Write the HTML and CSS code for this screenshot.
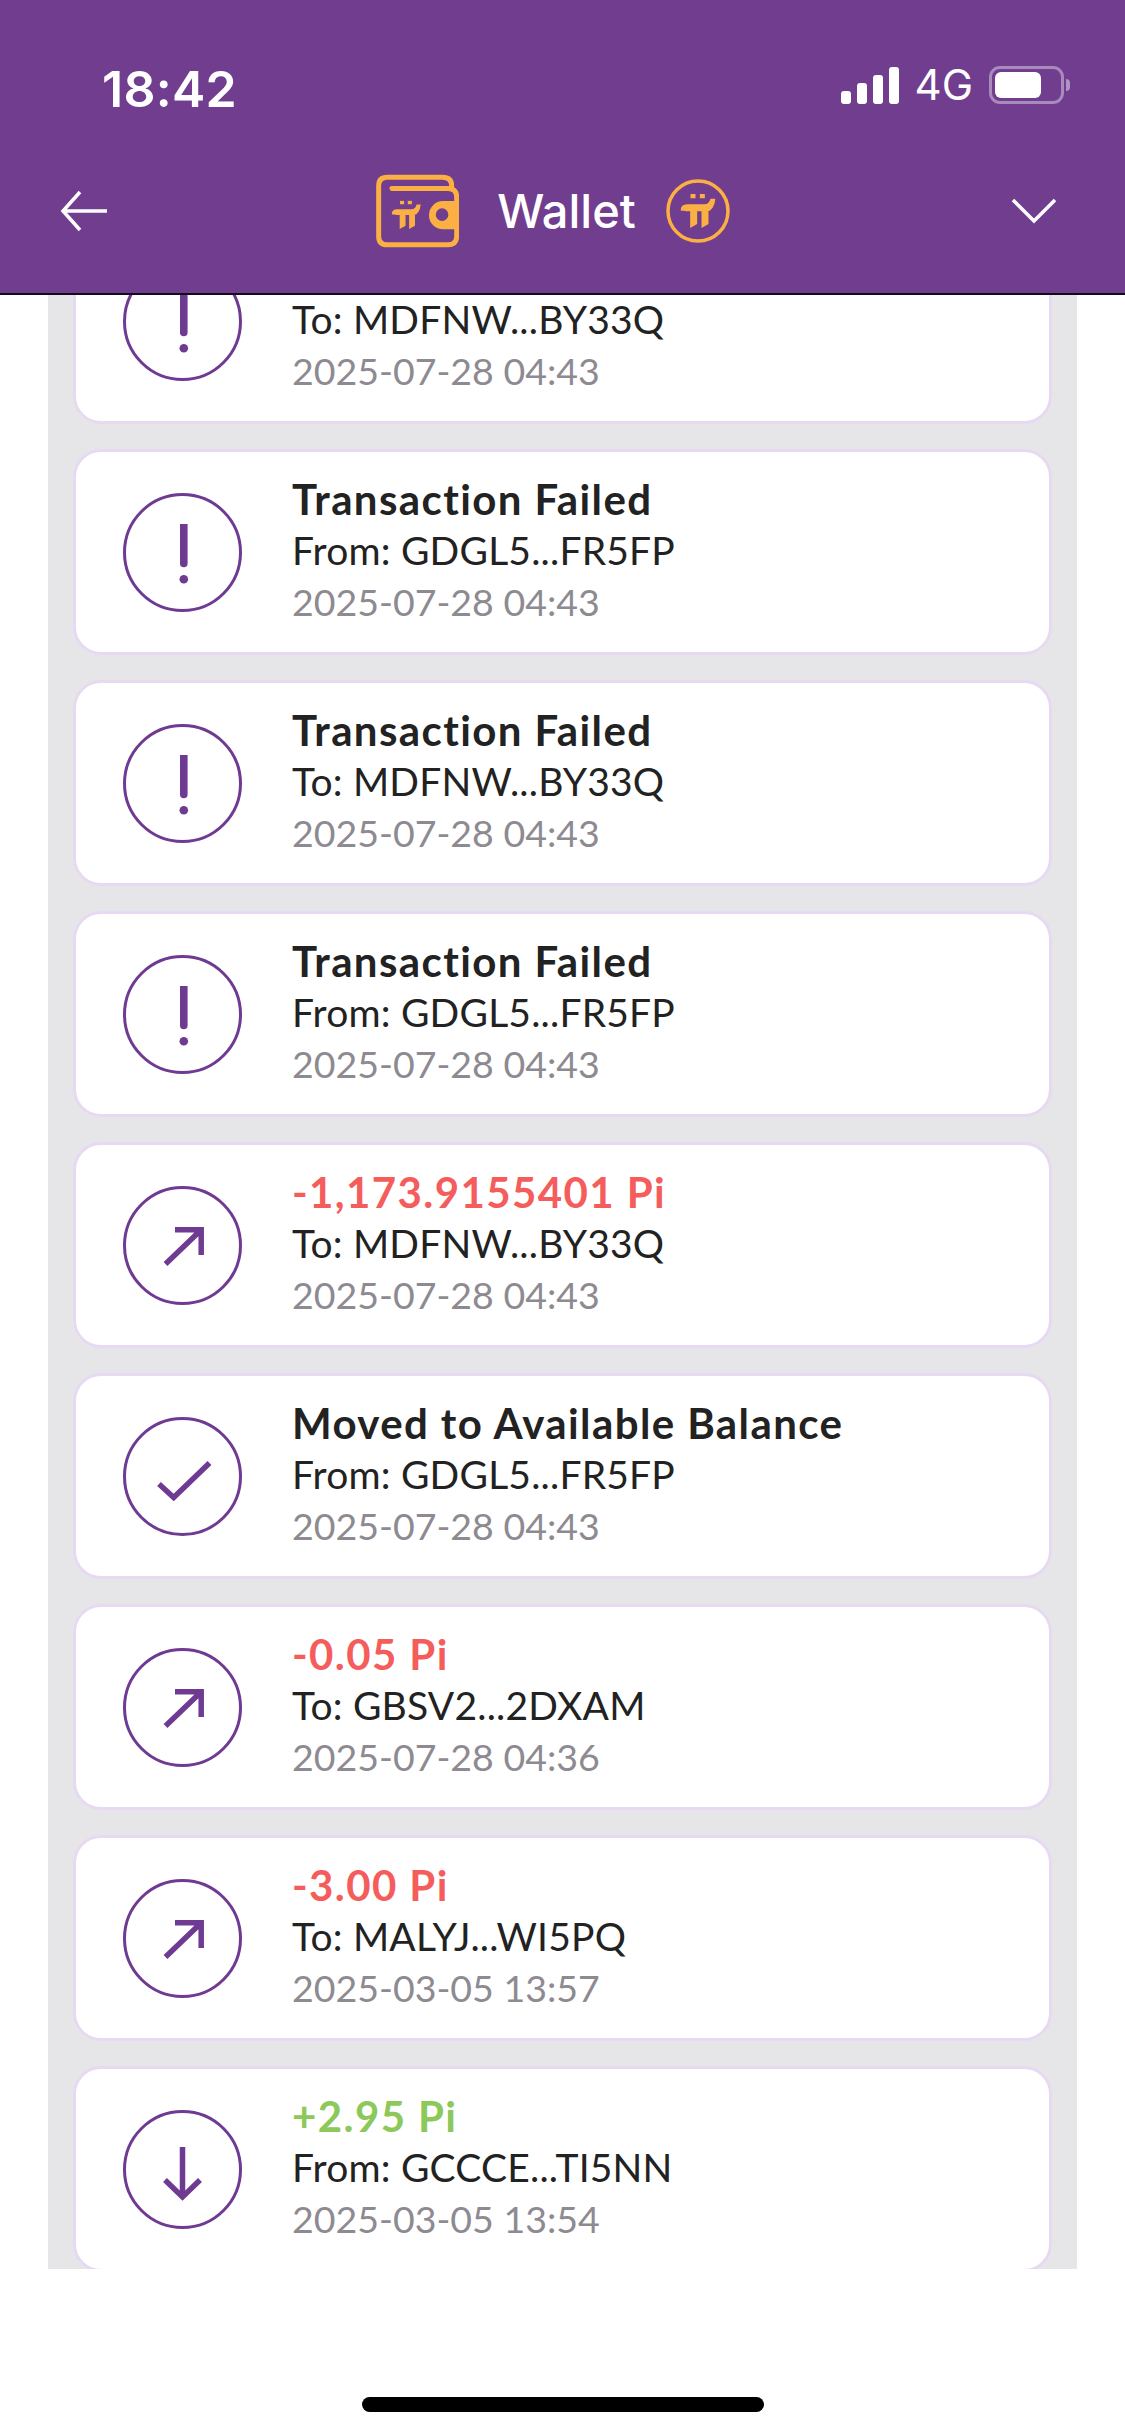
FILE: index.html
```html
<!DOCTYPE html>
<html lang="en">
<head>
<meta charset="utf-8">
<title>Wallet</title>
<link rel="stylesheet" href="styles.css">
</head>
<body>
<svg class="defs" width="0" height="0" aria-hidden="true">
  <symbol id="pi" viewBox="0 0 105 102">
    <path d="M30 0h15v13H30zM58 0h15v13H58z"/>
    <path d="M0 50Q1 31 20 31H72Q85 31 90 14H105Q100 52 78 52H84V90L63 102V52H50V90L29 102V52H18Q14 52 13 50Z"/>
  </symbol>
  <symbol id="i-alert" viewBox="0 0 119 119">
    <circle class="ring" cx="59.5" cy="59.5" r="58"/>
    <path class="fill" d="M57 31h7.6v39.5a3.8 3.8 0 0 1-7.6 0z"/>
    <circle class="fill" cx="60.8" cy="86.3" r="4.3"/>
  </symbol>
  <symbol id="i-send" viewBox="0 0 119 119">
    <circle class="ring" cx="59.5" cy="59.5" r="58"/>
    <path class="line" d="M42.5 78 78 44M52 43.8H78.2V69"/>
  </symbol>
  <symbol id="i-check" viewBox="0 0 119 119">
    <circle class="ring" cx="59.5" cy="59.5" r="58"/>
    <path class="line" d="M36 67 50.7 80.5 86.5 46"/>
  </symbol>
  <symbol id="i-receive" viewBox="0 0 119 119">
    <circle class="ring" cx="59.5" cy="59.5" r="58"/>
    <path class="line" d="M59.5 37V87M42 70 59.5 87 77 70"/>
  </symbol>
</svg>

<div class="screen">
  <header class="header">
    <div class="status">
      <span class="time">18:42</span>
      <div class="status-right">
        <div class="signal"><i class="b1"></i><i class="b2"></i><i class="b3"></i><i class="b4"></i></div>
        <span class="net">4G</span>
        <div class="battery"><div class="battery-body"><div class="battery-fill"></div></div><div class="battery-nub"></div></div>
      </div>
    </div>
    <nav class="nav">
      <svg class="back" viewBox="0 0 48 42"><path d="M47 21H4M20 2 3 21 20 40"/></svg>
      <div class="title">
        <svg class="wallet" viewBox="108 70 250 220">
          <path class="wallet-line" d="M336 112V104Q336 78 308 78H142Q116 78 116 104V256Q116 282 142 282H325Q351 282 351 256V225M351 150V138Q351 112 325 112H156"/>
          <path class="wallet-clasp" fill-rule="evenodd" d="M358 150H310A42.500 42.500 0 0 0 310 235H358ZM307 172A19 19 0 1 1 307 210A19 19 0 1 1 307 172Z"/>
          <use href="#pi" x="155" y="148" width="88" height="87" class="wallet-pi"/>
        </svg>
        <span class="title-text">Wallet</span>
        <svg class="coin" viewBox="0 0 64 64">
          <circle cx="32" cy="32" r="30" class="coin-ring"/>
          <use href="#pi" x="14.500" y="15" width="35" height="34" class="wallet-pi"/>
        </svg>
      </div>
      <svg class="chev" viewBox="0 0 46 26"><path d="M2 2 23 23 44 2"/></svg>
    </nav>
  </header>

  <main class="viewport">
    <ul class="list">
      <li class="card"><svg class="ico"><use href="#i-alert"/></svg><div class="txt"><b class="head">Transaction Failed</b><span class="addr">To: MDFNW...BY33Q</span><span class="date">2025-07-28 04:43</span></div></li>
      <li class="card"><svg class="ico"><use href="#i-alert"/></svg><div class="txt"><b class="head">Transaction Failed</b><span class="addr">From: GDGL5...FR5FP</span><span class="date">2025-07-28 04:43</span></div></li>
      <li class="card"><svg class="ico"><use href="#i-alert"/></svg><div class="txt"><b class="head">Transaction Failed</b><span class="addr">To: MDFNW...BY33Q</span><span class="date">2025-07-28 04:43</span></div></li>
      <li class="card"><svg class="ico"><use href="#i-alert"/></svg><div class="txt"><b class="head">Transaction Failed</b><span class="addr">From: GDGL5...FR5FP</span><span class="date">2025-07-28 04:43</span></div></li>
      <li class="card"><svg class="ico"><use href="#i-send"/></svg><div class="txt"><b class="head neg">-1,173.9155401 Pi</b><span class="addr">To: MDFNW...BY33Q</span><span class="date">2025-07-28 04:43</span></div></li>
      <li class="card"><svg class="ico"><use href="#i-check"/></svg><div class="txt"><b class="head">Moved to Available Balance</b><span class="addr">From: GDGL5...FR5FP</span><span class="date">2025-07-28 04:43</span></div></li>
      <li class="card"><svg class="ico"><use href="#i-send"/></svg><div class="txt"><b class="head neg">-0.05 Pi</b><span class="addr">To: GBSV2...2DXAM</span><span class="date">2025-07-28 04:36</span></div></li>
      <li class="card"><svg class="ico"><use href="#i-send"/></svg><div class="txt"><b class="head neg">-3.00 Pi</b><span class="addr">To: MALYJ...WI5PQ</span><span class="date">2025-03-05 13:57</span></div></li>
      <li class="card"><svg class="ico"><use href="#i-receive"/></svg><div class="txt"><b class="head pos">+2.95 Pi</b><span class="addr">From: GCCCE...TI5NN</span><span class="date">2025-03-05 13:54</span></div></li>
    </ul>
  </main>

  <footer class="footer"><div class="home"></div></footer>
</div>
</body>
</html>
```

FILE: styles.css
```css
* { box-sizing: border-box; }
html, body { margin: 0; padding: 0; background: #fff; }
.defs { position: absolute; }
.screen { width: 1125px; height: 2436px; display: flex; flex-direction: column; overflow: hidden; background: #fff; font-family: "Lato", "Noto Sans", sans-serif; }

.header { height: 295px; flex: none; background: #713d8f; border-bottom: 2px solid #120a1a; color: #fff; font-family: "Inter", sans-serif; }
.status { height: 161px; padding: 63px 55px 0 102px; display: flex; justify-content: space-between; align-items: flex-start; }
.time { font-size: 50px; font-weight: 600; line-height: 52px; letter-spacing: .3px; }
.status-right { display: flex; align-items: center; gap: 16px; height: 44px; }
.signal { display: flex; align-items: flex-end; gap: 6px; height: 37px; }
.signal i { display: block; width: 10px; background: #fff; border-radius: 3px; }
.signal .b1 { height: 13px; }
.signal .b2 { height: 21px; }
.signal .b3 { height: 29px; }
.signal .b4 { height: 37px; }
.net { font-size: 42px; font-weight: 400; line-height: 44px; }
.battery { display: flex; align-items: center; gap: 2px; }
.battery-body { width: 75px; height: 38px; border: 3px solid rgba(255,255,255,.4); border-radius: 11px; padding: 3px; }
.battery-fill { width: 46px; height: 26px; background: #fff; border-radius: 6px; }
.battery-nub { width: 4px; height: 12px; background: rgba(255,255,255,.45); border-radius: 0 4px 4px 0; }

.nav { height: 100px; padding: 0 68px 0 60px; display: flex; align-items: center; justify-content: space-between; }
.back { width: 48px; height: 42px; }
.back path, .chev path { fill: none; stroke: #fff; stroke-width: 3.5; }
.chev { width: 46px; height: 26px; }
.title { display: flex; align-items: center; margin-left: -13px; }
.wallet { width: 83px; height: 74px; display: block; }
.wallet-line { fill: none; stroke: #fbb044; stroke-width: 15; stroke-linecap: round; }
.wallet-clasp { fill: #fbb044; }
.wallet-pi { fill: #fbb044; }
.title-text { font-size: 47px; font-weight: 500; line-height: 60px; margin: 0 30px 0 38px; }
.coin { width: 64px; height: 64px; display: block; }
.coin-ring { fill: none; stroke: #fbb044; stroke-width: 3.500; }

.viewport { height: 1974px; flex: none; overflow: hidden; margin: 0 48px; background: #e6e6e9; }
.list { list-style: none; margin: -77px 0 0; padding: 0 25px; display: flex; flex-direction: column; gap: 25px; }
.card { height: 206px; flex: none; display: flex; align-items: center; gap: 50px; padding-left: 47px; background: #fff; border: 3px solid #e8d9f3; border-radius: 28px; }
.ico { width: 119px; height: 119px; flex: none; display: block; }
.ring { fill: none; stroke: #6f3b92; stroke-width: 3; }
.fill { fill: #6f3b92; }
.line { fill: none; stroke: #6f3b92; stroke-width: 5.500; }
.txt { display: flex; flex-direction: column; font-size: 39px; line-height: 51px; margin-top: -3px; }
.head { font-size: 42px; font-weight: 700; letter-spacing: 1.400px; color: #222; }
.neg { color: #f55c5c; }
.pos { color: #8cc85a; }
.addr { color: #222; letter-spacing: .2px; }
.date { color: #8e8a91; font-size: 37.5px; }

.footer { flex: 1; display: flex; justify-content: center; align-items: flex-end; padding-bottom: 24px; }
.home { width: 402px; height: 15px; border-radius: 8px; background: #000; }
```
